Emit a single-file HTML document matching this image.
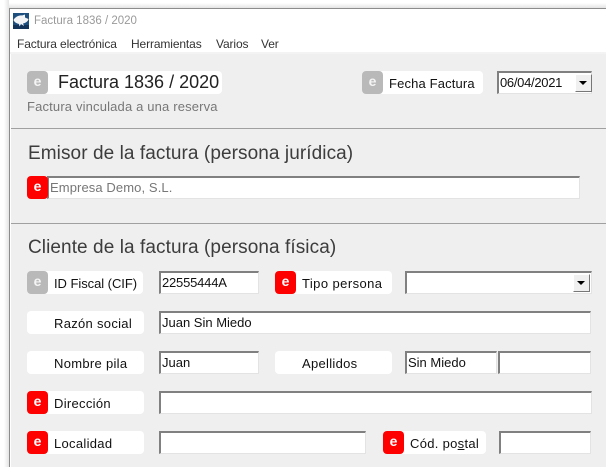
<!DOCTYPE html>
<html><head><meta charset="utf-8">
<style>
html,body{margin:0;padding:0;width:606px;height:467px;overflow:hidden;background:#fff}
*{box-sizing:border-box}
body{font-family:"Liberation Sans",sans-serif;color:#222;position:relative}
.a{position:absolute;white-space:nowrap}
.win{left:9px;top:8px;width:597px;height:459px;background:#fff;border-left:1px solid #8c8c8c;border-top:1px solid #8c8c8c}
.shadow{left:0;top:0;width:606px;height:8px;background:linear-gradient(#fff,#fff 3px,#e4e4e4)}
.shadowl{left:0;top:0;width:9px;height:467px;background:linear-gradient(90deg,#fff,#fff 4px,#e4e4e4)}
.menu{font-size:12px;color:#333;top:37px;letter-spacing:-.12px}
.grey{left:11px;top:54px;width:595px;height:413px;background:#efefef}
.hr{left:11px;width:595px;height:1px;background:#a0a0a0}
.pill{background:#fff;border-radius:4px;height:23px}
.ic{width:21px;height:23px;border-radius:4px;color:#fff;font-weight:bold;font-size:14px;line-height:20px;text-align:center}
.r{background:#f00}
.g{background:#b9b9b9;color:#f4f4f4}
.lb{font-size:13px;color:#111;line-height:15px;letter-spacing:.3px}
.in{background:#fff;border-top:2px solid #808080;border-left:2px solid #808080;border-right:1px solid #e3e3e3;border-bottom:1px solid #e3e3e3;font-size:13px;color:#111;line-height:19px;padding-left:1px;height:23px}
.h{font-size:19px;color:#3c3c3c;line-height:22px;letter-spacing:.08px}
.btn{background:#f0f0f0;border-top:1px solid #fff;border-left:1px solid #fff;border-right:1px solid #777;border-bottom:1px solid #777;width:17px;height:18px}
.btn:after{content:"";position:absolute;left:3px;top:6px;border-left:4px solid transparent;border-right:4px solid transparent;border-top:4px solid #000}
</style></head><body>
<div class="a shadow"></div>
<div class="a shadowl"></div>
<div class="a win"></div>

<svg class="a" style="left:13px;top:13px" width="16" height="16" viewBox="0 0 16 16"><rect width="16" height="16" fill="#1d4f7e"/><rect y="12" width="16" height="4" fill="#12345a"/><path d="M0.5 7 C2 4 6 2 9 2.5 L12 1.5 L12 4.5 L15.5 6 C15 8.5 12.5 10 10 10.5 L11 13 L8 11 L6.5 13.5 L6 11 C4 10.5 1.5 9.5 0.5 7Z" fill="#f2f4f6"/></svg>
<div class="a" style="left:34px;top:14px;font-size:11.5px;line-height:15px;color:#9a9a9a">Factura 1836 / 2020</div>
<div class="a menu" style="left:17px">Factura electrónica</div>
<div class="a menu" style="left:131px">Herramientas</div>
<div class="a menu" style="left:216px">Varios</div>
<div class="a menu" style="left:261px">Ver</div>

<div class="a" style="left:10px;top:52px;width:596px;height:2px;background:#f3f3f3"></div>
<div class="a grey"></div>
<div class="a hr" style="top:128px"></div>
<div class="a hr" style="top:223px"></div>

<div class="a pill" style="left:27px;top:71px;width:195px"></div>
<div class="a ic g" style="left:27px;top:71px">e</div>
<div class="a" style="left:58px;top:72px;font-size:18px;line-height:21px;color:#222">Factura 1836 / 2020</div>
<div class="a" style="left:27px;top:99px;font-size:13px;line-height:15px;color:#777;letter-spacing:.16px">Factura vinculada a una reserva</div>

<div class="a pill" style="left:362px;top:71px;width:121px"></div>
<div class="a ic g" style="left:362px;top:71px">e</div>
<div class="a lb" style="left:389px;top:76px;letter-spacing:.15px">Fecha Factura</div>
<div class="a in" style="left:497px;top:71px;width:95px;letter-spacing:-.3px">06/04/2021</div>
<div class="a btn" style="left:575px;top:74px"></div>

<div class="a h" style="left:28px;top:143px">Emisor de la factura (persona jurídica)</div>
<div class="a in" style="left:47px;top:176px;width:533px;color:#777;padding-left:1px;letter-spacing:.1px">Empresa Demo, S.L.</div>
<div class="a ic r" style="left:27px;top:176px">e</div>

<div class="a h" style="left:28px;top:237px">Cliente de la factura (persona física)</div>

<div class="a pill" style="left:27px;top:271px;width:116px"></div>
<div class="a ic g" style="left:27px;top:271px">e</div>
<div class="a lb" style="left:54px;top:276px;letter-spacing:-.05px">ID Fiscal (CIF)</div>
<div class="a in" style="left:159px;top:271px;width:100px;letter-spacing:-.2px">22555444A</div>
<div class="a pill" style="left:275px;top:271px;width:117px"></div>
<div class="a ic r" style="left:275px;top:271px">e</div>
<div class="a lb" style="left:302px;top:276px;letter-spacing:.42px">Tipo persona</div>
<div class="a in" style="left:405px;top:271px;width:187px"></div>
<div class="a btn" style="left:573px;top:274px"></div>

<div class="a pill" style="left:27px;top:311px;width:117px"></div>
<div class="a lb" style="left:54px;top:316px">Razón social</div>
<div class="a in" style="left:159px;top:311px;width:432px">Juan Sin Miedo</div>

<div class="a pill" style="left:27px;top:351px;width:117px"></div>
<div class="a lb" style="left:54px;top:356px">Nombre pila</div>
<div class="a in" style="left:159px;top:351px;width:100px">Juan</div>
<div class="a pill" style="left:275px;top:351px;width:117px"></div>
<div class="a lb" style="left:302px;top:356px">Apellidos</div>
<div class="a in" style="left:405px;top:351px;width:92px">Sin Miedo</div>
<div class="a in" style="left:498px;top:351px;width:93px"></div>

<div class="a pill" style="left:27px;top:391px;width:117px"></div>
<div class="a ic r" style="left:27px;top:391px">e</div>
<div class="a lb" style="left:54px;top:396px">Dirección</div>
<div class="a in" style="left:159px;top:391px;width:433px"></div>

<div class="a pill" style="left:27px;top:431px;width:117px"></div>
<div class="a ic r" style="left:27px;top:431px">e</div>
<div class="a lb" style="left:54px;top:436px">Localidad</div>
<div class="a in" style="left:159px;top:431px;width:207px"></div>
<div class="a pill" style="left:383px;top:431px;width:103px"></div>
<div class="a ic r" style="left:383px;top:431px">e</div>
<div class="a lb" style="left:410px;top:436px">Cód. po<u>s</u>tal</div>
<div class="a in" style="left:499px;top:431px;width:92px"></div>
</body></html>
